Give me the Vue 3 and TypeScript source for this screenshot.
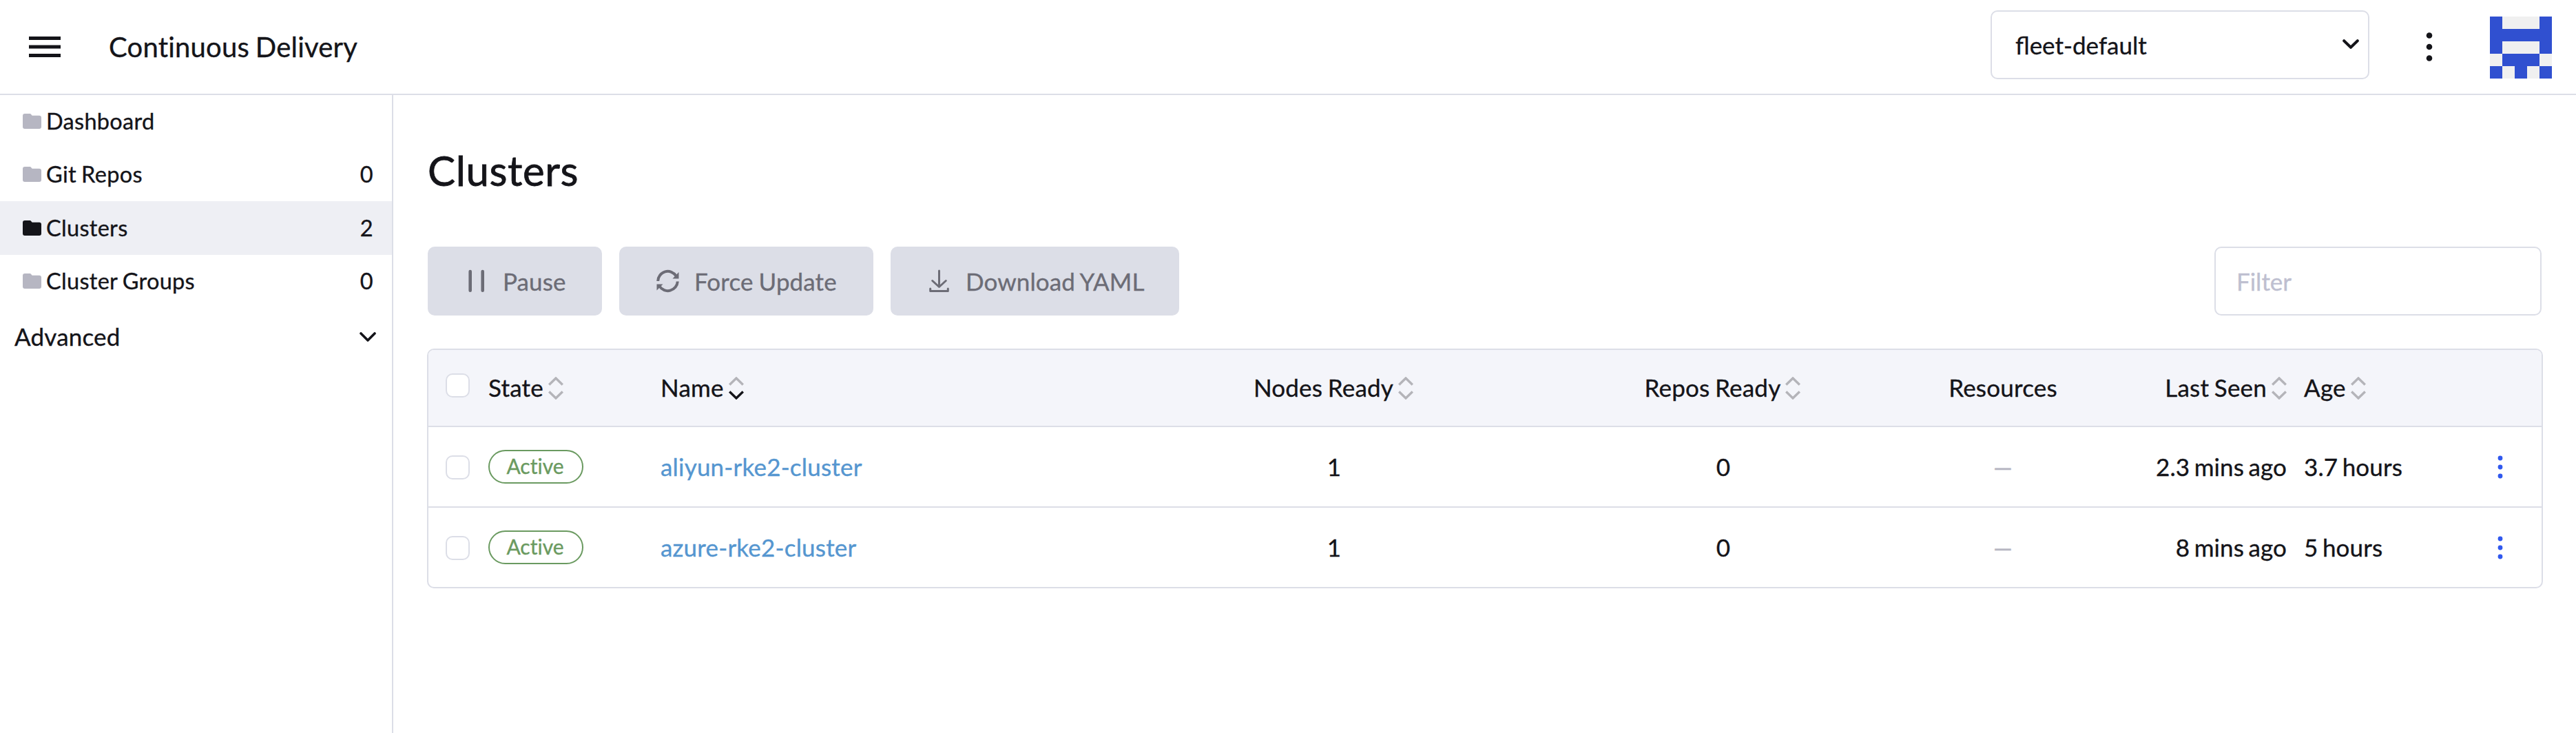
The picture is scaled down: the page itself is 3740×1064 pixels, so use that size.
<script setup lang="ts">
interface NavItem {
  label: string
  count?: number
  active?: boolean
}

interface Column {
  key: string
  label: string
  sortable: boolean
  sorted?: boolean
}

interface Cluster {
  name: string
  state: string
  nodes: number
  repos: number
  lastSeen: string
  age: string
}

const navItems: NavItem[] = [
  { label: 'Dashboard' },
  { label: 'Git Repos', count: 0 },
  { label: 'Clusters', count: 2, active: true },
  { label: 'Cluster Groups', count: 0 },
]

const columns: Column[] = [
  { key: 'state', label: 'State', sortable: true },
  { key: 'name', label: 'Name', sortable: true, sorted: true },
  { key: 'nodes', label: 'Nodes Ready', sortable: true },
  { key: 'repos', label: 'Repos Ready', sortable: true },
  { key: 'resources', label: 'Resources', sortable: false },
  { key: 'seen', label: 'Last Seen', sortable: true },
  { key: 'age', label: 'Age', sortable: true },
]

const clusters: Cluster[] = [
  { name: 'aliyun-rke2-cluster', state: 'Active', nodes: 1, repos: 0, lastSeen: '2.3 mins ago', age: '3.7 hours' },
  { name: 'azure-rke2-cluster', state: 'Active', nodes: 1, repos: 0, lastSeen: '8 mins ago', age: '5 hours' },
]

const avatar: string[] = ['10001', '11111', '10001', '01110', '10101']
</script>

<template>
  <div class="app">
    <header class="topbar">
      <svg class="menu" width="46" height="30" viewBox="0 0 46 30">
        <path d="M0 0h46v5H0zM0 12.5h46v5H0zM0 25h46v5H0z" fill="#141419" />
      </svg>
      <div class="product">Continuous Delivery</div>
      <div class="workspace">
        <span>fleet-default</span>
        <svg width="24" height="14" viewBox="0 0 24 14" fill="none" stroke="#141419" stroke-width="4" stroke-linecap="round" stroke-linejoin="round">
          <path d="M2.2 2.2L12 11.8L21.8 2.2" />
        </svg>
      </div>
      <svg class="kebab" width="10" height="42" viewBox="0 0 10 42" fill="#141419">
        <circle cx="5" cy="4.5" r="4.3" /><circle cx="5" cy="21" r="4.3" /><circle cx="5" cy="37.5" r="4.3" />
      </svg>
      <svg class="avatar" width="90" height="90" viewBox="0 0 5 5" shape-rendering="crispEdges">
        <rect width="5" height="5" fill="#f0f0f0" />
        <template v-for="(line, y) in avatar" :key="y">
          <template v-for="(cell, x) in line.split('')" :key="x">
            <rect v-if="cell === '1'" :x="x" :y="y" width="1" height="1" fill="#3050d0" />
          </template>
        </template>
      </svg>
    </header>

    <div class="body">
      <nav class="sidebar">
        <div v-for="item in navItems" :key="item.label" class="nav-item" :class="{ active: item.active }">
          <svg class="folder" width="27" height="22" viewBox="0 0 27 22">
            <path d="M3 0H10.2C11.4 0 12 .6 12.6 1.5C13.1 2.3 13.6 2.8 14.6 2.8H24C25.9 2.8 27 3.9 27 5.6V19C27 20.9 25.9 22 24 22H3C1.1 22 0 20.9 0 19V3C0 1.1 1.1 0 3 0Z" fill="currentColor" />
          </svg>
          <span class="nav-label">{{ item.label }}</span>
          <span v-if="item.count !== undefined" class="count">{{ item.count }}</span>
        </div>
        <div class="nav-group">
          <span>Advanced</span>
          <svg width="24" height="14" viewBox="0 0 24 14" fill="none" stroke="#141419" stroke-width="3.6" stroke-linecap="round" stroke-linejoin="round">
            <path d="M2 2L12 12L22 2" />
          </svg>
        </div>
      </nav>

      <main class="main">
        <h1>Clusters</h1>
        <div class="toolbar">
          <button class="btn pause" type="button">
            <svg width="24" height="34" viewBox="0 0 24 34" stroke="currentColor" stroke-width="4.6" stroke-linecap="round">
              <path d="M2.7 3V30.7M20.7 3V30.7" />
            </svg>
            <span>Pause</span>
          </button>
          <button class="btn update" type="button">
            <svg width="33" height="34" viewBox="0 0 33 34" fill="none" stroke="currentColor" stroke-width="4">
              <path d="M2.2 17A14.3 14.5 0 0 1 28.5 9.5" />
              <path d="M30.8 17.5A14.3 14.5 0 0 1 4.5 24.5" />
              <path d="M32.5 4V13.5H23.5ZM.5 30.5V21.5H9.5Z" fill="currentColor" stroke="none" />
            </svg>
            <span>Force Update</span>
          </button>
          <button class="btn download" type="button">
            <svg width="29" height="34" viewBox="0 0 29 34" fill="none" stroke="currentColor" stroke-width="3" stroke-linecap="round" stroke-linejoin="round">
              <path d="M14.5 2V25M4.7 16.5L14.5 25.5L24.3 16.5M1.7 28V31.5H27.3V28" />
            </svg>
            <span>Download YAML</span>
          </button>
          <input class="filter" type="text" placeholder="Filter" />
        </div>

        <section class="table">
          <div class="row head">
            <div class="cell check"><span class="box"></span></div>
            <div v-for="col in columns" :key="col.key" class="cell" :class="col.key">
              <span>{{ col.label }}</span>
              <svg v-if="col.sortable" class="sort" width="22" height="33" viewBox="0 0 22 33" fill="none" stroke-width="3.4">
                <path d="M1.2 11.5L11 2L20.8 11.5" stroke="#b4b4b9" />
                <path d="M1.2 21.5L11 31L20.8 21.5" :stroke="col.sorted ? '#141419' : '#b4b4b9'" />
              </svg>
            </div>
            <div class="cell"></div>
          </div>
          <div v-for="c in clusters" :key="c.name" class="row">
            <div class="cell check"><span class="box"></span></div>
            <div class="cell status"><span class="badge">{{ c.state }}</span></div>
            <div class="cell name"><a>{{ c.name }}</a></div>
            <div class="cell nodes">{{ c.nodes }}</div>
            <div class="cell repos">{{ c.repos }}</div>
            <div class="cell resources muted">—</div>
            <div class="cell seen">{{ c.lastSeen }}</div>
            <div class="cell age">{{ c.age }}</div>
            <div class="cell actions">
              <svg width="8" height="34" viewBox="0 0 8 34" fill="#3058ee">
                <circle cx="4" cy="4" r="3.4" /><circle cx="4" cy="17" r="3.4" /><circle cx="4" cy="30" r="3.4" />
              </svg>
            </div>
          </div>
        </section>
      </main>
    </div>
  </div>
</template>

<style>
body {
  margin: 0;
  background: #fff;
}
</style>

<style scoped>
.app {
  display: flex;
  flex-direction: column;
  width: 3740px;
  height: 1064px;
  overflow: hidden;
  background: #fff;
  color: #141419;
  font-family: Lato, "Liberation Sans", sans-serif;
  font-size: 35px;
  line-height: 42px;
  letter-spacing: 0.2px;
  word-spacing: -1.5px;
  -webkit-text-stroke: 0.35px currentColor;
}
.app *,
.app {
  box-sizing: border-box;
}
svg {
  display: block;
  flex: none;
}
.topbar {
  display: flex;
  align-items: center;
  flex: none;
  height: 138px;
  padding: 0 35px 0 42px;
  border-bottom: 2px solid #dcdee7;
}
.product {
  margin-left: 70px;
  font-size: 40px;
  line-height: 48px;
}
.workspace {
  display: flex;
  align-items: center;
  justify-content: space-between;
  width: 550px;
  height: 100px;
  margin: -6px 0 0 auto;
  padding: 0 13px 0 34px;
  border: 2px solid #dcdee7;
  border-radius: 10px;
  letter-spacing: 0;
}
.workspace svg {
  margin-bottom: 2px;
}
.kebab {
  margin-left: 82px;
}
.avatar {
  margin: 2px 0 0 83px;
}
.body {
  display: flex;
  flex: 1;
  min-height: 0;
}
.sidebar {
  width: 571px;
  border-right: 2px solid #dcdee7;
}
.nav-item {
  display: flex;
  align-items: center;
  height: 77.5px;
  padding: 0 27px 0 33px;
  font-size: 32.5px;
  line-height: 40px;
  letter-spacing: 0.3px;
}
.nav-item:first-child {
  height: 76.5px;
  padding-bottom: 1px;
}
.nav-item.active {
  background: #eeeff4;
}
.folder {
  color: #b6b6c2;
}
.active .folder {
  color: #141419;
}
.nav-label {
  margin-left: 7px;
}
.count {
  margin-left: auto;
}
.nav-group {
  display: flex;
  align-items: center;
  justify-content: space-between;
  height: 82px;
  padding: 0 23px 0 21px;
}
.nav-group svg {
  margin-top: 2px;
}
.main {
  flex: 1;
  padding: 0 48px 0 49px;
}
h1 {
  margin: 73px 0 75px 1px;
  font-size: 60px;
  font-weight: 400;
  line-height: 72px;
  letter-spacing: 0.6px;
  -webkit-text-stroke-width: 0.8px;
}
.toolbar {
  display: flex;
  gap: 25px;
  height: 100px;
  padding: 0 2px 0 1px;
}
.btn {
  display: flex;
  align-items: center;
  height: 100px;
  padding: 0;
  border: 0;
  border-radius: 10px;
  background: #dcdee7;
  color: #6c6c76;
  font: inherit;
  letter-spacing: 0.1px;
  word-spacing: -1px;
}
.pause {
  width: 253px;
  padding-left: 59px;
}
.pause span {
  margin-left: 26px;
}
.update {
  width: 369px;
  padding-left: 54px;
}
.update span {
  margin-left: 22px;
}
.download {
  width: 419px;
  padding-left: 56px;
}
.download span {
  margin-left: 24px;
}
.filter {
  width: 475px;
  height: 100px;
  margin-left: auto;
  padding: 0 30px;
  border: 2px solid #dcdee7;
  border-radius: 10px;
  background: #fff;
  color: #141419;
  font: inherit;
}
.filter::placeholder {
  color: #bebfd0;
}
.table {
  margin-top: 48px;
  border: 2px solid #dcdee7;
  border-radius: 10px;
  overflow: hidden;
}
.row {
  display: grid;
  grid-template-columns: 87px 250px 721px 514px 616px 196px 314px 250px 120px;
  height: 117px;
  border-bottom: 2px solid #dcdee7;
}
.row:last-child {
  height: 115px;
  border-bottom: 0;
}
.head {
  height: 112px;
  background: #f4f5fa;
}
.cell {
  display: flex;
  align-items: center;
  padding-bottom: 2px;
  white-space: nowrap;
}
.check {
  padding: 1px 0 0 25px;
}
.head .check {
  padding: 0 0 7px 25px;
}
.status,
.actions {
  padding-bottom: 0;
}
.box {
  width: 35px;
  height: 35px;
  border: 2px solid #dcdee7;
  border-radius: 10px;
  background: #fff;
}
.sort {
  margin: 2px 0 0 7px;
}
.nodes,
.repos,
.resources,
.actions {
  justify-content: center;
}
.head .nodes,
.head .repos {
  padding-right: 2px;
}
.seen {
  justify-content: flex-end;
}
.row:not(.head) .seen,
.row:not(.head) .age {
  letter-spacing: 0.1px;
  word-spacing: -2.5px;
}
.age {
  padding-left: 25px;
}
.muted {
  color: #b6b6c2;
}
.badge {
  width: 138px;
  height: 49px;
  padding-right: 2px;
  border: 2px solid #6a9a60;
  border-radius: 25px;
  color: #6a9a60;
  font-size: 30px;
  line-height: 43px;
  letter-spacing: 0;
  font-variant-ligatures: none;
  text-align: center;
}
.name a {
  color: #5596d0;
}
</style>
